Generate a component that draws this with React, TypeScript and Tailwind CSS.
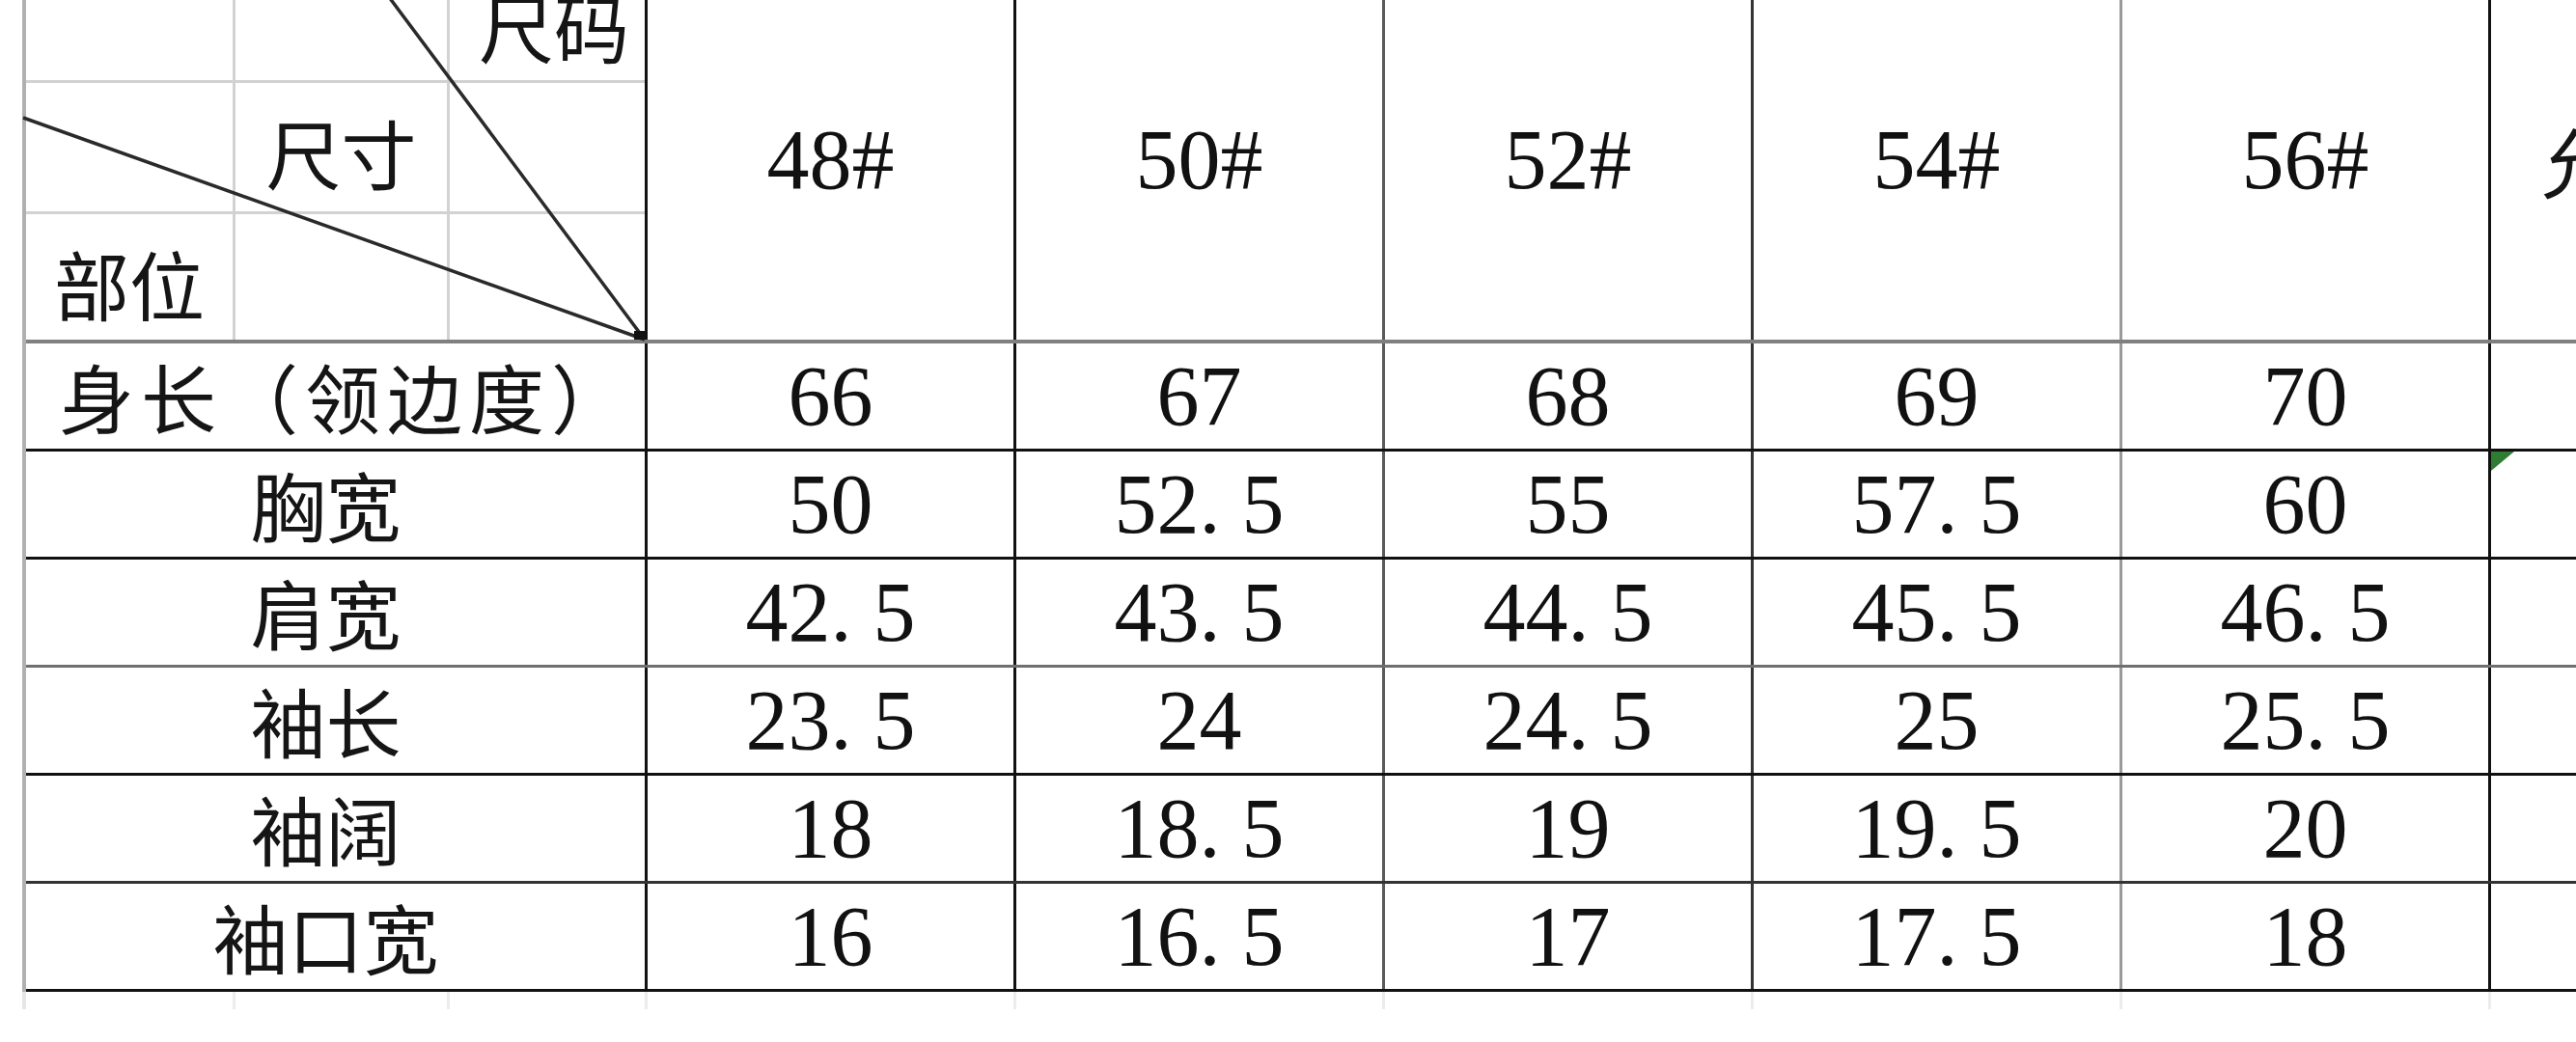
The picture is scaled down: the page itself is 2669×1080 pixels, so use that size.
import React from "react";

type Row = { label: string; values: string[]; line: string };

const sizes = ["48#", "50#", "52#", "54#", "56#"];

const rows: Row[] = [
  { label: "身长（领边度）", values: ["66", "67", "68", "69", "70"], line: "border-[#111]" },
  { label: "胸宽", values: ["50", "52.5", "55", "57.5", "60"], line: "border-[#111]" },
  { label: "肩宽", values: ["42.5", "43.5", "44.5", "45.5", "46.5"], line: "border-[#6f6f6f]" },
  { label: "袖长", values: ["23.5", "24", "24.5", "25", "25.5"], line: "border-[#111]" },
  { label: "袖阔", values: ["18", "18.5", "19", "19.5", "20"], line: "border-[#333]" },
  { label: "袖口宽", values: ["16", "16.5", "17", "17.5", "18"], line: "border-[#111]" },
];

// column separators differ a little in the photo
const colLines = ["border-[#111]", "border-[#111]", "border-[#5a5a5a]", "border-[#333]", "border-[#9a9a9a]"];

const cjk = "font-['Noto_Sans_CJK_SC','Noto_Sans',sans-serif]";
const num = "font-['Liberation_Serif','Times_New_Roman',serif]";

function Num({ v }: { v: string }) {
  const [a, b] = v.split(".");
  return (
    <span className={`${num} text-[88px] leading-none text-[#111]`}>
      {a}
      {b !== undefined && (
        <>
          <span className="pr-[22px]">.</span>
          {b}
        </>
      )}
    </span>
  );
}

function CornerCell() {
  return (
    <div className="relative w-[641px] shrink-0 h-full">
      <div className="grid h-full grid-cols-[217px_222px_1fr] grid-rows-[136px_136px_1fr] text-[#151515]">
        <div className="border-r-[3px] border-b-[3px] border-[#d2d2d2]" />
        <div className="border-r-[3px] border-b-[3px] border-[#d2d2d2]" />
        <div className={`border-b-[3px] border-[#d2d2d2] flex items-center justify-center pt-[20px] pl-[14px] ${cjk} text-[78px]`}>
          尺码
        </div>
        <div className="border-r-[3px] border-b-[3px] border-[#d2d2d2]" />
        <div className={`border-r-[3px] border-b-[3px] border-[#d2d2d2] flex items-center justify-center pt-[10px] ${cjk} text-[78px]`}>
          尺寸
        </div>
        <div className="border-b-[3px] border-[#d2d2d2]" />
        <div className={`border-r-[3px] border-[#d2d2d2] flex items-center justify-center pt-[12px] ${cjk} text-[78px]`}>
          部位
        </div>
        <div className="border-r-[3px] border-[#d2d2d2]" />
        <div />
      </div>
      <svg className="absolute inset-0 overflow-visible" width="641" height="402" viewBox="0 0 641 402">
        <line x1="341" y1="0" x2="641" y2="402" stroke="#2a2a2a" strokeWidth="3.5" />
        <line x1="-3" y1="172" x2="641" y2="402" stroke="#2a2a2a" strokeWidth="3.5" />
        <rect x="630" y="393" width="12" height="9" fill="#111" />
      </svg>
    </div>
  );
}

export default function App() {
  return (
    <div className="w-[2669px] h-[1080px] overflow-hidden bg-white">
      <div className="ml-[23px] -mt-[50px] w-[2700px]">
        <div className="border-l-4 border-[#b0b0b0]">
          {/* header */}
          <div className="flex h-[406px] border-b-4 border-[#808080]">
            <CornerCell />
            {sizes.map((s, i) => (
              <div
                key={s}
                className={`w-[382px] shrink-0 border-l-[3px] ${colLines[i]} flex items-center justify-center pt-[30px]`}
              >
                <span className={`${num} text-[88px] leading-none text-[#111]`}>{s}</span>
              </div>
            ))}
            <div className={`flex-1 overflow-hidden border-l-[3px] border-[#111] flex items-center pl-[52px] pt-[30px] whitespace-nowrap ${cjk} text-[78px] text-[#151515]`}>
              允许误差
            </div>
          </div>

          {/* body */}
          {rows.map((r, ri) => (
            <div key={r.label} className={`flex h-[112px] border-b-[3px] ${r.line}`}>
              <div
                className={`w-[641px] shrink-0 flex items-center justify-center whitespace-nowrap ${cjk} text-[78px] text-[#151515] ${
                  ri === 0 ? "tracking-[7px] pl-[22px]" : "pr-[20px]"
                }`}
              >
                {r.label}
              </div>
              {r.values.map((v, i) => (
                <div
                  key={i}
                  className={`w-[382px] shrink-0 border-l-[3px] ${colLines[i]} flex items-center justify-center`}
                >
                  <Num v={v} />
                </div>
              ))}
              <div className="relative flex-1 border-l-[3px] border-[#111]">
                {ri === 1 && (
                  <div className="absolute left-0 top-0 w-0 h-0 border-t-[20px] border-r-[24px] border-t-[#2e7d32] border-r-transparent" />
                )}
              </div>
            </div>
          ))}
        </div>

        {/* faint sheet gridlines under the table */}
        <div className="flex h-[18px]">
          <div className="w-[4px] bg-[#e6e6e6]" />
          <div className="w-[217px] border-r-[3px] border-[#ececec]" />
          <div className="w-[222px] border-r-[3px] border-[#ececec]" />
          <div className="w-[202px]" />
          {sizes.map((s) => (
            <div key={s} className="w-[382px] border-l-[3px] border-[#ececec]" />
          ))}
          <div className="flex-1 border-l-[3px] border-[#ececec]" />
        </div>
      </div>
    </div>
  );
}
